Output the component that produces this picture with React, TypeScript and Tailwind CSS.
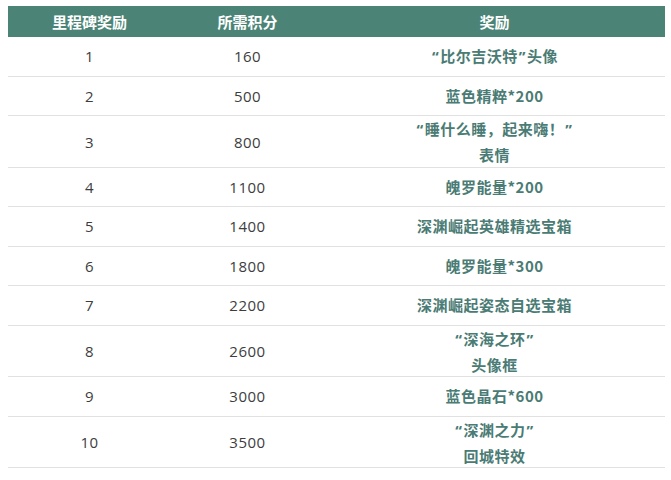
import React from "react";

type Row = { m: string; p: string; r: string[] };

const rows: Row[] = [
  { m: "1", p: "160", r: ["“比尔吉沃特”头像"] },
  { m: "2", p: "500", r: ["蓝色精粹*200"] },
  { m: "3", p: "800", r: ["“睡什么睡，起来嗨！”", "表情"] },
  { m: "4", p: "1100", r: ["魄罗能量*200"] },
  { m: "5", p: "1400", r: ["深渊崛起英雄精选宝箱"] },
  { m: "6", p: "1800", r: ["魄罗能量*300"] },
  { m: "7", p: "2200", r: ["深渊崛起姿态自选宝箱"] },
  { m: "8", p: "2600", r: ["“深海之环”", "头像框"] },
  { m: "9", p: "3000", r: ["蓝色晶石*600"] },
  { m: "10", p: "3500", r: ["“深渊之力”", "回城特效"] },
];

const numFont = { fontFamily: '"Open Sans", "Noto Sans CJK SC", sans-serif' };
const cjkFont = { fontFamily: '"Noto Sans CJK SC", "Noto Sans", sans-serif' };
const quoteFont = { fontFamily: '"Open Sans", sans-serif' };

function Reward({ text }: { text: string }) {
  const parts = text.split(/([“”])/);
  return (
    <div>
      {parts.map((p, i) =>
        p === "“" || p === "”" ? (
          <span key={i} style={quoteFont} className="px-[1px]">
            {p}
          </span>
        ) : (
          <span key={i}>{p}</span>
        )
      )}
    </div>
  );
}

export default function App() {
  return (
    <div className="w-[671px] h-[480px] bg-white pt-[6px] px-[8px] overflow-hidden" style={cjkFont}>
      <div className="w-[657px]">
        <div className="grid grid-cols-[163px_153px_1fr] h-[31px] bg-[#4b8477] text-white font-bold text-[15px] items-center text-center leading-none">
          <div>里程碑奖励</div>
          <div>所需积分</div>
          <div>奖励</div>
        </div>
        {rows.map((row) => (
          <div
            key={row.m}
            className={`grid grid-cols-[163px_153px_1fr] items-center text-center border-b border-[#e1e1e1] ${
              row.r.length > 1 ? "h-[51.5px]" : "h-[39.5px]"
            }`}
          >
            <div className="text-[15px] text-[#3d3d3d] tracking-[0.5px]" style={numFont}>
              {row.m}
            </div>
            <div className="text-[15px] text-[#3d3d3d] tracking-[0.5px]" style={numFont}>
              {row.p}
            </div>
            <div className="text-[15px] font-bold text-[#4a7b74] leading-[26px] tracking-[0.5px]">
              {row.r.map((t) => (
                <Reward key={t} text={t} />
              ))}
            </div>
          </div>
        ))}
      </div>
    </div>
  );
}
